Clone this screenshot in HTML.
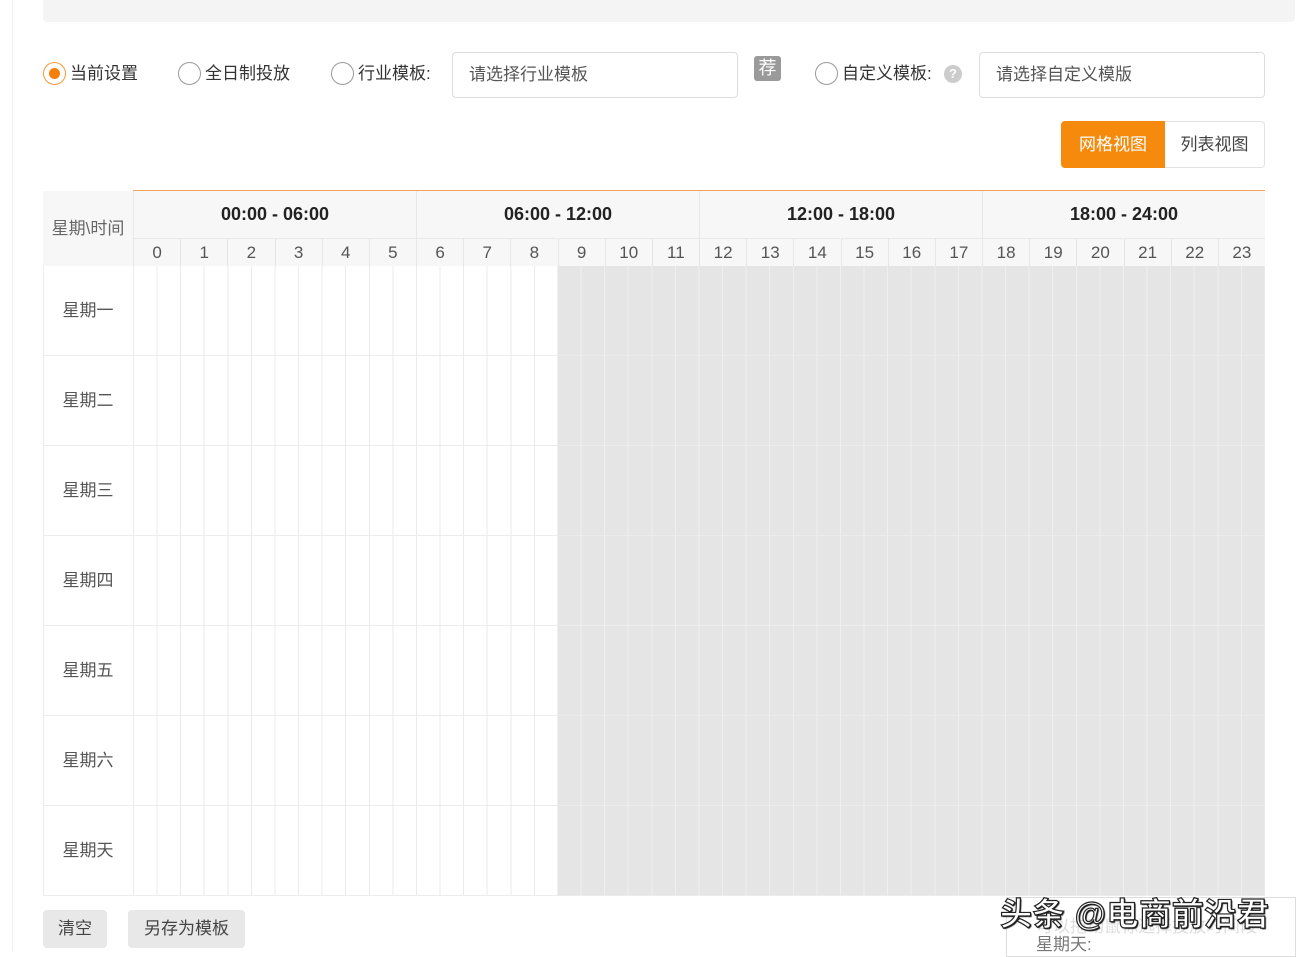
<!DOCTYPE html>
<html><head><meta charset="utf-8">
<style>
*{box-sizing:border-box;margin:0;padding:0}
body{width:1299px;height:951px;background:#fff;position:relative;overflow:hidden;font-family:"Liberation Sans","Noto Sans CJK SC",sans-serif;color:#333;font-size:17px}
.abs{position:absolute}
.radio{position:absolute;width:23px;height:23px;border:1px solid #999;border-radius:50%;background:#fff}
.radio.on{border-color:#f39a3a}
.radio.on::after{content:"";position:absolute;left:5px;top:5px;width:11px;height:11px;border-radius:50%;background:#f47f0a}
.lbl{position:absolute;font-size:17px;color:#333;line-height:20px}
.inp{position:absolute;border:1px solid #ddd;border-radius:4px;background:#fff;font-size:17px;color:#555;padding-left:16px;line-height:44px}
.hdr{position:absolute;background:#f7f7f7}
.grp{position:absolute;top:191px;height:47px;width:283px;text-align:center;font-weight:bold;font-size:18px;line-height:47px;color:#222;border-left:1px solid #e8e8e8}
.num{position:absolute;top:238px;height:28px;width:47.17px;text-align:center;font-size:17px;color:#555;line-height:28px;border-left:1px solid #e6e6e6;border-top:1px solid #e8e8e8}
.day{position:absolute;left:43px;width:90px;height:90px;text-align:center;line-height:90px;font-size:17px;color:#555;border-bottom:1px solid #ececec}
.row{position:absolute;left:133px;width:1132px;height:90px;border-bottom:1px solid #ececec;
background:
linear-gradient(to right,transparent 0,transparent 424px,#e5e5e5 424px),
repeating-linear-gradient(to right,#ebebeb 0,#ebebeb 1px,transparent 1px,transparent 23.583px);}
.row::after{content:"";position:absolute;left:424px;top:0;right:0;bottom:0;background:repeating-linear-gradient(to right,#efefef 0,#efefef 1px,transparent 1px,transparent 23.583px);}
.btn{position:absolute;top:910px;height:38px;background:#e8e8e8;border-radius:4px;font-size:17px;color:#444;line-height:38px;text-align:center}
</style></head><body>
<div class="abs" style="left:12px;top:0;width:1px;height:951px;background:#eee"></div>
<div class="abs" style="left:43px;top:0;width:1252px;height:22px;background:#f4f4f4;border-radius:0 0 4px 4px"></div>

<div class="radio on" style="left:43px;top:62px"></div>
<div class="lbl" style="left:70px;top:64px">当前设置</div>
<div class="radio" style="left:178px;top:62px"></div>
<div class="lbl" style="left:205px;top:64px">全日制投放</div>
<div class="radio" style="left:331px;top:62px"></div>
<div class="lbl" style="left:358px;top:64px">行业模板:</div>
<div class="inp" style="left:452px;top:52px;width:286px;height:46px">请选择行业模板</div>
<div class="abs" style="left:754px;top:56px;width:27px;height:25px;background:#9a9a9a;border-radius:3px;color:#fff;font-size:18px;text-align:center;line-height:25px">荐</div>
<div class="radio" style="left:815px;top:62px"></div>
<div class="lbl" style="left:842px;top:64px">自定义模板:</div>
<div class="abs" style="left:944px;top:65px;width:18px;height:18px;border-radius:50%;background:#ccc;color:#fff;font-size:13px;text-align:center;line-height:18px;font-weight:bold">?</div>
<div class="inp" style="left:979px;top:52px;width:286px;height:46px">请选择自定义模版</div>

<div class="abs" style="left:1061px;top:121px;width:104px;height:47px;background:#f58a0c;border-radius:4px 0 0 4px;color:#fff;font-size:17px;text-align:center;line-height:47px">网格视图</div>
<div class="abs" style="left:1165px;top:121px;width:100px;height:47px;border:1px solid #e2e2e2;border-left:none;border-radius:0 4px 4px 0;color:#444;font-size:17px;text-align:center;line-height:45px">列表视图</div>

<div class="hdr" style="left:43px;top:191px;width:1222px;height:75px"></div>
<div class="abs" style="left:133px;top:190px;width:1132px;height:1px;background:#f3a35a"></div>
<div class="abs" style="left:43px;top:191px;width:90px;height:75px;text-align:center;line-height:75px;font-size:17px;color:#666">星期\时间</div>
<div class="grp" style="left:133px">00:00 - 06:00</div>
<div class="grp" style="left:416px">06:00 - 12:00</div>
<div class="grp" style="left:699px">12:00 - 18:00</div>
<div class="grp" style="left:982px">18:00 - 24:00</div>
<div class="num" style="left:133.0px">0</div><div class="num" style="left:180.2px">1</div><div class="num" style="left:227.3px">2</div><div class="num" style="left:274.5px">3</div><div class="num" style="left:321.7px">4</div><div class="num" style="left:368.8px">5</div><div class="num" style="left:416.0px">6</div><div class="num" style="left:463.2px">7</div><div class="num" style="left:510.3px">8</div><div class="num" style="left:557.5px">9</div><div class="num" style="left:604.7px">10</div><div class="num" style="left:651.8px">11</div><div class="num" style="left:699.0px">12</div><div class="num" style="left:746.2px">13</div><div class="num" style="left:793.3px">14</div><div class="num" style="left:840.5px">15</div><div class="num" style="left:887.7px">16</div><div class="num" style="left:934.8px">17</div><div class="num" style="left:982.0px">18</div><div class="num" style="left:1029.2px">19</div><div class="num" style="left:1076.3px">20</div><div class="num" style="left:1123.5px">21</div><div class="num" style="left:1170.7px">22</div><div class="num" style="left:1217.8px">23</div>

<div class="abs" style="left:43px;top:266px;width:1px;height:630px;background:#ececec"></div>
<div class="day" style="top:266px">星期一</div><div class="row" style="top:266px"></div>
<div class="day" style="top:356px">星期二</div><div class="row" style="top:356px"></div>
<div class="day" style="top:446px">星期三</div><div class="row" style="top:446px"></div>
<div class="day" style="top:536px">星期四</div><div class="row" style="top:536px"></div>
<div class="day" style="top:626px">星期五</div><div class="row" style="top:626px"></div>
<div class="day" style="top:716px">星期六</div><div class="row" style="top:716px"></div>
<div class="day" style="top:806px">星期天</div><div class="row" style="top:806px"></div>

<div class="btn" style="left:43px;width:64px">清空</div>
<div class="btn" style="left:128px;width:117px">另存为模板</div>

<div class="abs" style="left:1006px;top:897px;width:290px;height:60px;border:1px solid #ddd;background:#fff"></div>
<div class="abs" style="left:1036px;top:912px;font-size:17px;color:#ddd">可以拖动鼠标选择投放时间段</div>
<div class="abs" style="left:1036px;top:930px;font-size:17px;color:#777">星期天:</div>
<div class="abs" style="left:1000px;top:889px;font-size:32px;color:#fff;-webkit-text-stroke:1.2px #222;font-weight:bold;letter-spacing:0.6px;white-space:nowrap;text-shadow:1px 1px 1px #000">头条 @电商前沿君</div>
</body></html>
